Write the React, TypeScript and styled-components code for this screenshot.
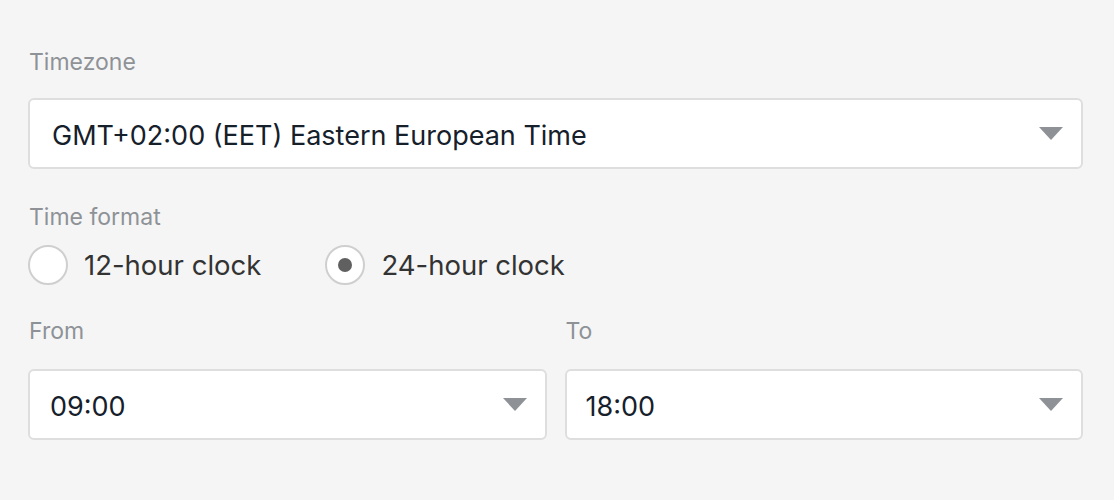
import React from 'react';
import styled, { createGlobalStyle } from 'styled-components';

const GlobalStyle = createGlobalStyle`
  body {
    margin: 0;
    background: #f5f5f5;
    font-family: Inter, "Noto Sans", sans-serif;
  }
`;

const Page = styled.div`
  width: 1114px;
  height: 500px;
  box-sizing: border-box;
  padding: 48px 31px 0 28px;
  display: flex;
  flex-direction: column;
`;

const Label = styled.div`
  font-size: 23px;
  line-height: 28px;
  color: #8e9297;
  padding-left: 1px;
`;

const SelectBox = styled.div<{ $indent: number }>`
  height: 71px;
  box-sizing: border-box;
  background: #fff;
  border: 2px solid #dedede;
  border-radius: 6px;
  display: flex;
  align-items: center;
  justify-content: space-between;
  padding: 4px 18px 0 ${(p) => p.$indent}px;
  font-size: 27px;
  color: #15202b;
`;

const Arrow = styled.span`
  width: 0;
  height: 0;
  margin-top: -4px;
  border-left: 12px solid transparent;
  border-right: 12px solid transparent;
  border-top: 13px solid #8e9297;
`;

const Field = styled.div<{ $gap: number; $top?: number }>`
  display: flex;
  flex-direction: column;
  gap: ${(p) => p.$gap}px;
  margin-top: ${(p) => p.$top ?? 0}px;
`;

const RadioRow = styled.div`
  display: flex;
  align-items: center;
  gap: 64px;
  margin-top: 14px;
`;

const RadioOption = styled.label`
  display: flex;
  align-items: center;
  gap: 16px;
  font-size: 27.5px;
  color: #333;
`;

const RadioCircle = styled.span<{ $checked: boolean }>`
  width: 40px;
  height: 40px;
  box-sizing: border-box;
  border-radius: 50%;
  border: 2px solid #cfcfcf;
  background: #fff;
  display: flex;
  align-items: center;
  justify-content: center;
  &::after {
    content: '';
    display: ${(p) => (p.$checked ? 'block' : 'none')};
    width: 14px;
    height: 14px;
    border-radius: 50%;
    background: #606060;
  }
`;

const Columns = styled.div`
  display: grid;
  grid-template-columns: 1fr 1fr;
  gap: 18px;
  margin-top: 32px;
`;

const Select: React.FC<{ value: string; indent?: number }> = ({ value, indent = 22 }) => (
  <SelectBox $indent={indent}>
    <span>{value}</span>
    <Arrow />
  </SelectBox>
);

const App: React.FC = () => {
  return (
    <Page>
      <GlobalStyle />
      <Field $gap={22}>
        <Label>Timezone</Label>
        <Select value='GMT+02:00 (EET) Eastern European Time' />
      </Field>
      <Field $gap={0} $top={34}>
        <Label>Time format</Label>
        <RadioRow>
          <RadioOption>
            <RadioCircle $checked={false} />
            12-hour clock
          </RadioOption>
          <RadioOption>
            <RadioCircle $checked />
            24-hour clock
          </RadioOption>
        </RadioRow>
      </Field>
      <Columns>
        <Field $gap={24}>
          <Label>From</Label>
          <Select value='09:00' indent={20} />
        </Field>
        <Field $gap={24}>
          <Label>To</Label>
          <Select value='18:00' indent={19} />
        </Field>
      </Columns>
    </Page>
  );
};

export default App;
